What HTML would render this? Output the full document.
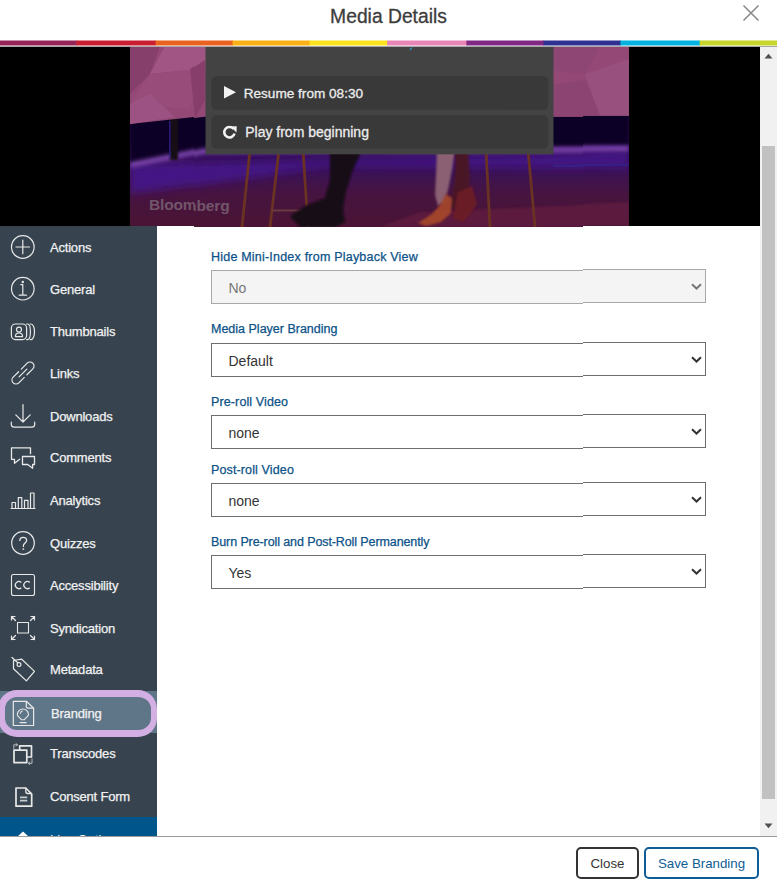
<!DOCTYPE html>
<html><head><meta charset="utf-8">
<style>
*{box-sizing:border-box;margin:0;padding:0}
html,body{width:777px;height:886px;overflow:hidden;background:#fff;font-family:"Liberation Sans",sans-serif}
.abs{position:absolute}
#title{left:0;width:777px;top:5px;text-align:center;font-size:19.3px;color:#3c3c3c;line-height:24px;-webkit-text-stroke:0.3px #3c3c3c}
#bar{left:0;top:40px;width:777px;height:6px;display:flex}
#bar div{flex:1}
#video{left:0;top:47px;width:760px;height:180px;background:#000;overflow:hidden}
#sb{left:760px;top:47px;width:17px;height:789px;background:#f1f1f1}
#side{left:0;top:226px;width:157px;height:610px;background:#37444f;overflow:hidden}
.item{position:absolute;left:0;width:157px;height:42px;color:#f0f0f0;font-size:13px}
.item span{position:absolute;left:50px;top:13px;line-height:16px}
.item svg{position:absolute;left:0;top:0}
#footer{left:0;top:836px;width:777px;height:50px;border-top:1px solid #9a9a9a;background:#fff}
.btn{position:absolute;top:847px;height:32px;border:2px solid #333;border-radius:5px;background:#fff;font-size:13.3px;text-align:center;line-height:29px}
.stxt{position:absolute;left:50px;font-size:13px;line-height:16px;color:#f2f2f2;white-space:nowrap;letter-spacing:-0.2px;-webkit-text-stroke:0.25px #f2f2f2}
.lbl{position:absolute;left:211px;font-size:12.5px;color:#0b5288;line-height:14px;white-space:nowrap;-webkit-text-stroke:0.25px #0b5288}
.sel{position:absolute;left:211px;width:495px;height:34px;border:1px solid #6e6e6e;background:#fff;color:#333;font-size:14px}
.sel span{position:absolute;left:16.5px;top:9px;line-height:17px}
.sel svg{position:absolute;left:479px;top:12.5px}
.sel svg path{stroke:#333}
.sel.dis{background:#f4f4f4;border-color:#a8a8a8;color:#777}
.sel.dis svg path{stroke:#777}
</style></head><body>

<div id="title" class="abs">Media Details</div>
<svg class="abs" style="left:742px;top:4px" width="18" height="18" viewBox="0 0 18 18"><path d="M1.5 1.5L16.5 16.5M16.5 1.5L1.5 16.5" stroke="#888" stroke-width="1.5" fill="none"/></svg>
<svg class="abs" style="left:0;top:0" width="777" height="47"><rect x="0" y="40.5" width="76.9" height="5" fill="#952456"/><rect x="76.3" y="40.5" width="79.8" height="5" fill="#c91e31"/><rect x="155.5" y="40.5" width="77.6" height="5" fill="#e9621f"/><rect x="232.5" y="40.5" width="77.6" height="5" fill="#f8b014"/><rect x="309.5" y="40.5" width="78.2" height="5" fill="#fce21f"/><rect x="387.1" y="40.5" width="79.9" height="5" fill="#e986b8"/><rect x="466.4" y="40.5" width="77.7" height="5" fill="#812784"/><rect x="543.5" y="40.5" width="77.5" height="5" fill="#2e3192"/><rect x="620.4" y="40.5" width="79.8" height="5" fill="#03b2e1"/><rect x="699.6" y="40.5" width="77.4" height="5" fill="#c8d62b"/></svg>
<div class="abs" style="left:0;top:46px;width:777px;height:1px;background:#a9a9a9"></div>

<div class="abs" style="left:194px;top:0;width:389px;height:836px;overflow:hidden">
<div class="abs" style="left:-194px;top:0;width:777px;height:886px">
<svg class="abs" style="left:0;top:47px" width="760" height="180" viewBox="0 47 760 180">
<defs>
<linearGradient id="floor" x1="0" y1="145" x2="0" y2="227" gradientUnits="userSpaceOnUse">
<stop offset="0" stop-color="#2e0c58"/><stop offset="0.3" stop-color="#3a1258"/><stop offset="0.6" stop-color="#461440"/><stop offset="1" stop-color="#4a1434"/>
</linearGradient>
<filter id="bl" x="-10%" y="-100%" width="120%" height="300%"><feGaussianBlur stdDeviation="2"/></filter>
<filter id="bl1" x="-20%" y="-20%" width="140%" height="140%"><feGaussianBlur stdDeviation="0.9"/></filter>
<filter id="bl3" x="-10%" y="-50%" width="120%" height="200%"><feGaussianBlur stdDeviation="4"/></filter>
<clipPath id="vc"><rect x="130" y="47" width="499" height="180"/></clipPath>
</defs>
<rect x="0" y="47" width="760" height="180" fill="#000"/>
<g clip-path="url(#vc)">
<rect x="130" y="47" width="499" height="180" fill="url(#floor)"/>
<polygon points="130,165 629,152 629,168 330,166 130,195" fill="#44168a" opacity="0.9" filter="url(#bl3)"/>
<polygon points="629,203 629,227 380,227 420,212" fill="#601e40" opacity="0.8" filter="url(#bl1)"/>
<polygon points="130,110 629,105 629,146 205,150 130,165" fill="#0e0626" filter="url(#bl1)"/>
<path d="M130 166L205 151L629 149.5" stroke="#8048b0" stroke-width="5" fill="none" filter="url(#bl)"/>
<path d="M553 166.5L629 166" stroke="#3030a0" stroke-width="1.5" fill="none" filter="url(#bl1)"/>
<rect x="170" y="118" width="8" height="43" fill="#120818" filter="url(#bl1)"/><rect x="169" y="122" width="1.6" height="36" fill="#2a2090" opacity="0.8"/>
<polygon points="130,47 629,47 629,116.8 205,116.8 130,125" fill="#934876"/>
<polygon points="130,47 160,47 150,75 130,95" fill="#853f6a"/>
<polygon points="165,47 230,47 200,70 150,75" fill="#a05584"/>
<polygon points="150,75 200,70 190,110 130,105" fill="#974c7a"/>
<polygon points="130,105 150,95 175,118 130,125" fill="#9c5282"/>
<polygon points="190,70 205,60 205,100 195,118" fill="#883e6a"/>
<polygon points="553,47 600,47 585,75 553,70" fill="#8e4674"/>
<polygon points="585,75 629,60 629,116.8 600,116.8" fill="#9a5282" opacity="0.8"/>
<polygon points="553,85 585,80 600,116.8 553,116.8" fill="#8c4572"/>
<g stroke-linecap="round">
<path d="M250 150L242 227M279 150L270 227M303 150L308 227M486 150L490 227M528 150L535 227" stroke="#6a3222" stroke-width="2.8"/>
<path d="M272 210.5H305" stroke="#6a3a40" stroke-width="1.8"/>
</g>
<path d="M330 150L362 150L352 172L345 195L343 210L345 222L335 227L300 227L290 216L305 206L325 198L330 180Z" fill="#140a14" filter="url(#bl1)"/>
<path d="M437 150L455 150L452 170L448 190L444 202L438 206L435 195L436 175Z" fill="#8a6072" filter="url(#bl1)"/>
<path d="M455 150L468 150L470 178L468 198L460 214L450 206L455 180Z" fill="#4a1828" filter="url(#bl1)"/>
<path d="M458 192L472 186L477 204L470 214L463 222L453 218Z" fill="#6a1c26" filter="url(#bl1)"/>
<path d="M418 223L432 214L440 205L446 194L452 198L451 213L441 222L426 226Z" fill="#a84a2a" opacity="0.9" filter="url(#bl1)"/>
<text x="149" y="210.8" font-family="Liberation Sans" font-weight="bold" font-size="15.5" fill="#a8a8a8" fill-opacity="0.45" letter-spacing="-0.15">Bloomberg</text>
</g>
<rect x="205.5" y="47" width="348" height="107.3" fill="#434343"/>
<rect x="211.3" y="76.3" width="337" height="33.5" rx="5" fill="#393939"/>
<rect x="211.3" y="115.2" width="337" height="33.4" rx="5" fill="#393939"/>
<polygon points="224,86 236,92.2 224,98.4" fill="#f2f2f2"/>
<path d="M234.5 133.5A5.2 5.2 0 1 1 233.5 129" stroke="#f2f2f2" stroke-width="2.6" fill="none"/><polygon points="230.5,126.5 236.7,126.3 236.5,132.5" fill="#f2f2f2"/>
<text x="243.7" y="98" font-family="Liberation Sans" font-size="13.6" fill="#ececec" stroke="#ececec" stroke-width="0.3">Resume from 08:30</text>
<text x="245.2" y="136.7" font-family="Liberation Sans" font-size="14" fill="#ececec" stroke="#ececec" stroke-width="0.3">Play from beginning</text>
<path d="M412 47.5L410 50" stroke="#2aa8e0" stroke-width="1.2"/>
</svg>

<div class="lbl" style="top:249.9px;letter-spacing:0.21px">Hide Mini-Index from Playback View</div>
<div class="lbl" style="top:321.7px;letter-spacing:0px">Media Player Branding</div>
<div class="lbl" style="top:395.2px;letter-spacing:0.12px">Pre-roll Video</div>
<div class="lbl" style="top:462.6px;letter-spacing:0.13px">Post-roll Video</div>
<div class="lbl" style="top:535.4px;letter-spacing:-0.1px">Burn Pre-roll and Post-Roll Permanently</div>
<div class="sel dis" style="top:270px"><span>No</span><svg width="11" height="7" viewBox="0 0 11 7"><path d="M1 1.2L5.5 5.5L10 1.2" fill="none" stroke-width="2"/></svg></div>
<div class="sel" style="top:343px"><span>Default</span><svg width="11" height="7" viewBox="0 0 11 7"><path d="M1 1.2L5.5 5.5L10 1.2" fill="none" stroke-width="2"/></svg></div>
<div class="sel" style="top:415px"><span>none</span><svg width="11" height="7" viewBox="0 0 11 7"><path d="M1 1.2L5.5 5.5L10 1.2" fill="none" stroke-width="2"/></svg></div>
<div class="sel" style="top:483px"><span>none</span><svg width="11" height="7" viewBox="0 0 11 7"><path d="M1 1.2L5.5 5.5L10 1.2" fill="none" stroke-width="2"/></svg></div>
<div class="sel" style="top:555px"><span>Yes</span><svg width="11" height="7" viewBox="0 0 11 7"><path d="M1 1.2L5.5 5.5L10 1.2" fill="none" stroke-width="2"/></svg></div>

</div></div>
<div class="abs" style="left:0;top:47px;width:194px;height:789px;overflow:hidden">
<div class="abs" style="left:0;top:-48px;width:777px;height:886px">
<svg class="abs" style="left:0;top:47px" width="760" height="180" viewBox="0 47 760 180">
<defs>
<linearGradient id="floor3" x1="0" y1="145" x2="0" y2="227" gradientUnits="userSpaceOnUse">
<stop offset="0" stop-color="#2e0c58"/><stop offset="0.3" stop-color="#3a1258"/><stop offset="0.6" stop-color="#461440"/><stop offset="1" stop-color="#4a1434"/>
</linearGradient>
<filter id="bl3x" x="-10%" y="-100%" width="120%" height="300%"><feGaussianBlur stdDeviation="2"/></filter>
<filter id="bl13" x="-20%" y="-20%" width="140%" height="140%"><feGaussianBlur stdDeviation="0.9"/></filter>
<filter id="bl33" x="-10%" y="-50%" width="120%" height="200%"><feGaussianBlur stdDeviation="4"/></filter>
<clipPath id="vc3"><rect x="130" y="47" width="499" height="180"/></clipPath>
</defs>
<rect x="0" y="47" width="760" height="180" fill="#000"/>
<g clip-path="url(#vc3)">
<rect x="130" y="47" width="499" height="180" fill="url(#floor3)"/>
<polygon points="130,165 629,152 629,168 330,166 130,195" fill="#44168a" opacity="0.9" filter="url(#bl33)"/>
<polygon points="629,203 629,227 380,227 420,212" fill="#601e40" opacity="0.8" filter="url(#bl13)"/>
<polygon points="130,110 629,105 629,146 205,150 130,165" fill="#0e0626" filter="url(#bl13)"/>
<path d="M130 166L205 151L629 149.5" stroke="#8048b0" stroke-width="5" fill="none" filter="url(#bl3x)"/>
<path d="M553 166.5L629 166" stroke="#3030a0" stroke-width="1.5" fill="none" filter="url(#bl13)"/>
<rect x="170" y="118" width="8" height="43" fill="#120818" filter="url(#bl13)"/><rect x="169" y="122" width="1.6" height="36" fill="#2a2090" opacity="0.8"/>
<polygon points="130,47 629,47 629,116.8 205,116.8 130,125" fill="#934876"/>
<polygon points="130,47 160,47 150,75 130,95" fill="#853f6a"/>
<polygon points="165,47 230,47 200,70 150,75" fill="#a05584"/>
<polygon points="150,75 200,70 190,110 130,105" fill="#974c7a"/>
<polygon points="130,105 150,95 175,118 130,125" fill="#9c5282"/>
<polygon points="190,70 205,60 205,100 195,118" fill="#883e6a"/>
<polygon points="553,47 600,47 585,75 553,70" fill="#8e4674"/>
<polygon points="585,75 629,60 629,116.8 600,116.8" fill="#9a5282" opacity="0.8"/>
<polygon points="553,85 585,80 600,116.8 553,116.8" fill="#8c4572"/>
<g stroke-linecap="round">
<path d="M250 150L242 227M279 150L270 227M303 150L308 227M486 150L490 227M528 150L535 227" stroke="#6a3222" stroke-width="2.8"/>
<path d="M272 210.5H305" stroke="#6a3a40" stroke-width="1.8"/>
</g>
<path d="M330 150L362 150L352 172L345 195L343 210L345 222L335 227L300 227L290 216L305 206L325 198L330 180Z" fill="#140a14" filter="url(#bl13)"/>
<path d="M437 150L455 150L452 170L448 190L444 202L438 206L435 195L436 175Z" fill="#8a6072" filter="url(#bl13)"/>
<path d="M455 150L468 150L470 178L468 198L460 214L450 206L455 180Z" fill="#4a1828" filter="url(#bl13)"/>
<path d="M458 192L472 186L477 204L470 214L463 222L453 218Z" fill="#6a1c26" filter="url(#bl13)"/>
<path d="M418 223L432 214L440 205L446 194L452 198L451 213L441 222L426 226Z" fill="#a84a2a" opacity="0.9" filter="url(#bl13)"/>
<text x="149" y="210.8" font-family="Liberation Sans" font-weight="bold" font-size="15.5" fill="#a8a8a8" fill-opacity="0.45" letter-spacing="-0.15">Bloomberg</text>
</g>
<rect x="205.5" y="47" width="348" height="107.3" fill="#434343"/>
<rect x="211.3" y="76.3" width="337" height="33.5" rx="5" fill="#393939"/>
<rect x="211.3" y="115.2" width="337" height="33.4" rx="5" fill="#393939"/>
<polygon points="224,86 236,92.2 224,98.4" fill="#f2f2f2"/>
<path d="M234.5 133.5A5.2 5.2 0 1 1 233.5 129" stroke="#f2f2f2" stroke-width="2.6" fill="none"/><polygon points="230.5,126.5 236.7,126.3 236.5,132.5" fill="#f2f2f2"/>
<text x="243.7" y="98" font-family="Liberation Sans" font-size="13.6" fill="#ececec" stroke="#ececec" stroke-width="0.3">Resume from 08:30</text>
<text x="245.2" y="136.7" font-family="Liberation Sans" font-size="14" fill="#ececec" stroke="#ececec" stroke-width="0.3">Play from beginning</text>
<path d="M412 47.5L410 50" stroke="#2aa8e0" stroke-width="1.2"/>
</svg>

<div class="lbl" style="top:249.9px;letter-spacing:0.21px">Hide Mini-Index from Playback View</div>
<div class="lbl" style="top:321.7px;letter-spacing:0px">Media Player Branding</div>
<div class="lbl" style="top:395.2px;letter-spacing:0.12px">Pre-roll Video</div>
<div class="lbl" style="top:462.6px;letter-spacing:0.13px">Post-roll Video</div>
<div class="lbl" style="top:535.4px;letter-spacing:-0.1px">Burn Pre-roll and Post-Roll Permanently</div>
<div class="sel dis" style="top:270px"><span>No</span><svg width="11" height="7" viewBox="0 0 11 7"><path d="M1 1.2L5.5 5.5L10 1.2" fill="none" stroke-width="2"/></svg></div>
<div class="sel" style="top:343px"><span>Default</span><svg width="11" height="7" viewBox="0 0 11 7"><path d="M1 1.2L5.5 5.5L10 1.2" fill="none" stroke-width="2"/></svg></div>
<div class="sel" style="top:415px"><span>none</span><svg width="11" height="7" viewBox="0 0 11 7"><path d="M1 1.2L5.5 5.5L10 1.2" fill="none" stroke-width="2"/></svg></div>
<div class="sel" style="top:483px"><span>none</span><svg width="11" height="7" viewBox="0 0 11 7"><path d="M1 1.2L5.5 5.5L10 1.2" fill="none" stroke-width="2"/></svg></div>
<div class="sel" style="top:555px"><span>Yes</span><svg width="11" height="7" viewBox="0 0 11 7"><path d="M1 1.2L5.5 5.5L10 1.2" fill="none" stroke-width="2"/></svg></div>

</div></div>
<div class="abs" style="left:583px;top:47px;width:177px;height:789px;overflow:hidden">
<div class="abs" style="left:-583px;top:-48px;width:777px;height:886px">
<svg class="abs" style="left:0;top:47px" width="760" height="180" viewBox="0 47 760 180">
<defs>
<linearGradient id="floor2" x1="0" y1="145" x2="0" y2="227" gradientUnits="userSpaceOnUse">
<stop offset="0" stop-color="#2e0c58"/><stop offset="0.3" stop-color="#3a1258"/><stop offset="0.6" stop-color="#461440"/><stop offset="1" stop-color="#4a1434"/>
</linearGradient>
<filter id="bl2" x="-10%" y="-100%" width="120%" height="300%"><feGaussianBlur stdDeviation="2"/></filter>
<filter id="bl12" x="-20%" y="-20%" width="140%" height="140%"><feGaussianBlur stdDeviation="0.9"/></filter>
<filter id="bl32" x="-10%" y="-50%" width="120%" height="200%"><feGaussianBlur stdDeviation="4"/></filter>
<clipPath id="vc2"><rect x="130" y="47" width="499" height="180"/></clipPath>
</defs>
<rect x="0" y="47" width="760" height="180" fill="#000"/>
<g clip-path="url(#vc2)">
<rect x="130" y="47" width="499" height="180" fill="url(#floor2)"/>
<polygon points="130,165 629,152 629,168 330,166 130,195" fill="#44168a" opacity="0.9" filter="url(#bl32)"/>
<polygon points="629,203 629,227 380,227 420,212" fill="#601e40" opacity="0.8" filter="url(#bl12)"/>
<polygon points="130,110 629,105 629,146 205,150 130,165" fill="#0e0626" filter="url(#bl12)"/>
<path d="M130 166L205 151L629 149.5" stroke="#8048b0" stroke-width="5" fill="none" filter="url(#bl2)"/>
<path d="M553 166.5L629 166" stroke="#3030a0" stroke-width="1.5" fill="none" filter="url(#bl12)"/>
<rect x="170" y="118" width="8" height="43" fill="#120818" filter="url(#bl12)"/><rect x="169" y="122" width="1.6" height="36" fill="#2a2090" opacity="0.8"/>
<polygon points="130,47 629,47 629,116.8 205,116.8 130,125" fill="#934876"/>
<polygon points="130,47 160,47 150,75 130,95" fill="#853f6a"/>
<polygon points="165,47 230,47 200,70 150,75" fill="#a05584"/>
<polygon points="150,75 200,70 190,110 130,105" fill="#974c7a"/>
<polygon points="130,105 150,95 175,118 130,125" fill="#9c5282"/>
<polygon points="190,70 205,60 205,100 195,118" fill="#883e6a"/>
<polygon points="553,47 600,47 585,75 553,70" fill="#8e4674"/>
<polygon points="585,75 629,60 629,116.8 600,116.8" fill="#9a5282" opacity="0.8"/>
<polygon points="553,85 585,80 600,116.8 553,116.8" fill="#8c4572"/>
<g stroke-linecap="round">
<path d="M250 150L242 227M279 150L270 227M303 150L308 227M486 150L490 227M528 150L535 227" stroke="#6a3222" stroke-width="2.8"/>
<path d="M272 210.5H305" stroke="#6a3a40" stroke-width="1.8"/>
</g>
<path d="M330 150L362 150L352 172L345 195L343 210L345 222L335 227L300 227L290 216L305 206L325 198L330 180Z" fill="#140a14" filter="url(#bl12)"/>
<path d="M437 150L455 150L452 170L448 190L444 202L438 206L435 195L436 175Z" fill="#8a6072" filter="url(#bl12)"/>
<path d="M455 150L468 150L470 178L468 198L460 214L450 206L455 180Z" fill="#4a1828" filter="url(#bl12)"/>
<path d="M458 192L472 186L477 204L470 214L463 222L453 218Z" fill="#6a1c26" filter="url(#bl12)"/>
<path d="M418 223L432 214L440 205L446 194L452 198L451 213L441 222L426 226Z" fill="#a84a2a" opacity="0.9" filter="url(#bl12)"/>
<text x="149" y="210.8" font-family="Liberation Sans" font-weight="bold" font-size="15.5" fill="#a8a8a8" fill-opacity="0.45" letter-spacing="-0.15">Bloomberg</text>
</g>
<rect x="205.5" y="47" width="348" height="107.3" fill="#434343"/>
<rect x="211.3" y="76.3" width="337" height="33.5" rx="5" fill="#393939"/>
<rect x="211.3" y="115.2" width="337" height="33.4" rx="5" fill="#393939"/>
<polygon points="224,86 236,92.2 224,98.4" fill="#f2f2f2"/>
<path d="M234.5 133.5A5.2 5.2 0 1 1 233.5 129" stroke="#f2f2f2" stroke-width="2.6" fill="none"/><polygon points="230.5,126.5 236.7,126.3 236.5,132.5" fill="#f2f2f2"/>
<text x="243.7" y="98" font-family="Liberation Sans" font-size="13.6" fill="#ececec" stroke="#ececec" stroke-width="0.3">Resume from 08:30</text>
<text x="245.2" y="136.7" font-family="Liberation Sans" font-size="14" fill="#ececec" stroke="#ececec" stroke-width="0.3">Play from beginning</text>
<path d="M412 47.5L410 50" stroke="#2aa8e0" stroke-width="1.2"/>
</svg>

<div class="lbl" style="top:249.9px;letter-spacing:0.21px">Hide Mini-Index from Playback View</div>
<div class="lbl" style="top:321.7px;letter-spacing:0px">Media Player Branding</div>
<div class="lbl" style="top:395.2px;letter-spacing:0.12px">Pre-roll Video</div>
<div class="lbl" style="top:462.6px;letter-spacing:0.13px">Post-roll Video</div>
<div class="lbl" style="top:535.4px;letter-spacing:-0.1px">Burn Pre-roll and Post-Roll Permanently</div>
<div class="sel dis" style="top:270px"><span>No</span><svg width="11" height="7" viewBox="0 0 11 7"><path d="M1 1.2L5.5 5.5L10 1.2" fill="none" stroke-width="2"/></svg></div>
<div class="sel" style="top:343px"><span>Default</span><svg width="11" height="7" viewBox="0 0 11 7"><path d="M1 1.2L5.5 5.5L10 1.2" fill="none" stroke-width="2"/></svg></div>
<div class="sel" style="top:415px"><span>none</span><svg width="11" height="7" viewBox="0 0 11 7"><path d="M1 1.2L5.5 5.5L10 1.2" fill="none" stroke-width="2"/></svg></div>
<div class="sel" style="top:483px"><span>none</span><svg width="11" height="7" viewBox="0 0 11 7"><path d="M1 1.2L5.5 5.5L10 1.2" fill="none" stroke-width="2"/></svg></div>
<div class="sel" style="top:555px"><span>Yes</span><svg width="11" height="7" viewBox="0 0 11 7"><path d="M1 1.2L5.5 5.5L10 1.2" fill="none" stroke-width="2"/></svg></div>

</div></div>
<div id="sb" class="abs"></div>
<div class="abs" style="left:762px;top:146px;width:13px;height:653px;background:#c1c1c1"></div>
<svg class="abs" style="left:760px;top:47px" width="17" height="789"><path d="M4.5 11.5L8.5 6.8L12.5 11.5Z" fill="#505050"/><path d="M4.5 776.5L8.5 781.2L12.5 776.5Z" fill="#505050"/></svg>

<div id="side" class="abs"></div>
<div class="abs" style="left:0;top:691px;width:157px;height:42px;background:#5f7689"></div>
<div class="abs" style="left:-2px;top:690px;width:159px;height:47px;border:7px solid #d4afe3;border-right-width:6px;border-radius:19px;background:#5f7689"></div>
<div class="stxt" style="top:239.8px">Actions</div>
<div class="stxt" style="top:281.6px">General</div>
<div class="stxt" style="top:324.3px">Thumbnails</div>
<div class="stxt" style="top:365.8px">Links</div>
<div class="stxt" style="top:408.8px">Downloads</div>
<div class="stxt" style="top:450.3px">Comments</div>
<div class="stxt" style="top:493.3px">Analytics</div>
<div class="stxt" style="top:535.5px">Quizzes</div>
<div class="stxt" style="top:577.8px">Accessibility</div>
<div class="stxt" style="top:620.5px">Syndication</div>
<div class="stxt" style="top:661.8px">Metadata</div>
<div class="stxt" style="top:705.8px;left:51px">Branding</div>
<div class="stxt" style="top:746.3px">Transcodes</div>
<div class="stxt" style="top:789.0px">Consent Form</div>
<div class="abs" style="left:0;top:817px;width:157px;height:19px;background:#00558a;overflow:hidden"><div style="position:absolute;left:50px;top:15px;color:#fff;font-size:13px;line-height:16px">Live Options</div><svg style="position:absolute;left:18px;top:14px" width="10" height="6"><path d="M0 5L5 0.5L10 5Z" fill="#fff"/></svg></div>
<svg class="abs" style="left:0;top:227px" width="157" height="609" viewBox="0 227 157 609" fill="none" stroke="#e8e8e8" stroke-width="1.2" stroke-linecap="round" stroke-linejoin="round">
<circle cx="22.8" cy="247" r="11.3"/><path d="M16 247H29.6M22.8 240.2V253.8"/>
<circle cx="22.8" cy="288.7" r="11.3"/><circle cx="22.8" cy="282" r="0.6" fill="#e8e8e8"/><path d="M20.8 284.6H22.8V295M19.2 295.2H26.4"/>
<rect x="11.4" y="324" width="15.2" height="15.6" rx="4"/><circle cx="19" cy="329.6" r="2.5"/><path d="M15.4 336.6c0-2.3 1.5-3.6 3.6-3.6s3.6 1.3 3.6 3.6z"/><path d="M26.6 324h1c1.8 0 2.8 3.6 2.8 7.8s-1 7.8-2.8 7.8h-1M30.4 324h0.6c2 0 3.5 3.6 3.5 7.8s-1.5 7.8-3.5 7.8h-0.6"/>
<g transform="translate(23 373) rotate(-45)"><path d="M-2.2 -4H-9.9A4 4 0 0 0 -9.9 4H-2.2M1.5 -4H9.9A4 4 0 0 1 9.9 4H1.5M-5.5 0H5.5"/></g>
<path d="M23 404.5V422M15.8 414.8L23 422L30.2 414.8M11.3 422v2.2c0 1.8 1.2 3 3 3h17.4c1.8 0 3-1.2 3-3V422"/>
<path d="M30.5 453.7V447.8H11.5V459.4H14.5V463.3L19.7 459.3" stroke-width="1.3"/><path d="M22.5 456.5H34.5V464.5H32.6V468.3L27.7 464.5H22.5Z" stroke-width="1.3"/>
<path d="M11 508.5H35M12 508.5V502.5H15.5V508.5M18.3 508.5V497.7H21.8V508.5M24.5 508.5V500.3H28V508.5M30.5 508.5V493H34V508.5"/>
<circle cx="23" cy="543" r="11.3"/>
<rect x="11.5" y="574.5" width="23" height="21" rx="2" stroke-width="1.1"/><path d="M21.24 582.50A3.5 3.5 0 1 0 21.24 587.70M29.74 582.50A3.5 3.5 0 1 0 29.74 587.70" stroke-width="1.3" stroke-linecap="butt"/>
<rect x="17.5" y="622.5" width="11" height="10.5" stroke-width="1.1"/><path d="M11.5 616.5L15.5 620.5M11.5 616.5V620M11.5 616.5H15M34.5 616.5L30.5 620.5M34.5 616.5V620M34.5 616.5H31M11.5 639.5L15.5 635.5M11.5 639.5V636M11.5 639.5H15M34.5 639.5L30.5 635.5M34.5 639.5V636M34.5 639.5H31"/>
<path d="M19.8 540.5c0-2 1.5-3.2 3.4-3.2s3.4 1.2 3.4 3.1c0 2.4-3.2 2.6-3.2 5.2v0.8" stroke-width="1.3"/><rect x="22.6" y="548.3" width="1.5" height="1.5" fill="#e8e8e8" stroke="none"/>
<path d="M13.3 701.3H26.3L33.6 708.3V725.5H13.3Z"/><path d="M26.3 701.8V706.5Q26.3 708.1 28 708.1H33.2"/><path d="M21.2 719.8C21 718 17.3 717 17.3 714.6A5.6 5.6 0 0 1 28.5 714.6C28.5 717 24.8 718 24.6 719.8ZM20 722.6H26.2M20.3 713.3A2.8 2.8 0 0 1 22.3 711" stroke-width="1.1"/>
<path d="M19.7 750V745.8H31.5V757H26.8M14 750.1H26.8V762.6H14Z" stroke-width="1.7"/><path d="M13.8 748.5V744.8H17.5M16 743.5L17.6 744.8L16 746M32 759V763.3H28.3M29.8 762L28.2 763.3L29.8 764.6" stroke-width="1" stroke="#b8bcc0"/>
<path d="M16 788H25.8L31.7 794V806.2H16Z" stroke-width="1.7"/><path d="M25.8 788.5V791.5Q25.8 793.5 27.8 793.5H31.5" stroke-width="1.3"/><path d="M20 797.3H27.2M20 800.7H27.2" stroke-width="1.7" stroke-linecap="butt" stroke="#c8ccd0"/>
<path d="M13.5 660.5L21.7 659.2L34.5 671.4L26.4 680.9L13.5 668.7Z"/><circle cx="19" cy="664.6" r="1.9"/><path d="M12 657.5L17.5 662.5"/>
</svg>

<div id="footer" class="abs"></div>
<div class="btn" style="left:576px;width:63px;color:#333">Close</div>
<div class="btn" style="left:644px;width:115px;color:#0f5d96;border-color:#0f5d96">Save Branding</div>
